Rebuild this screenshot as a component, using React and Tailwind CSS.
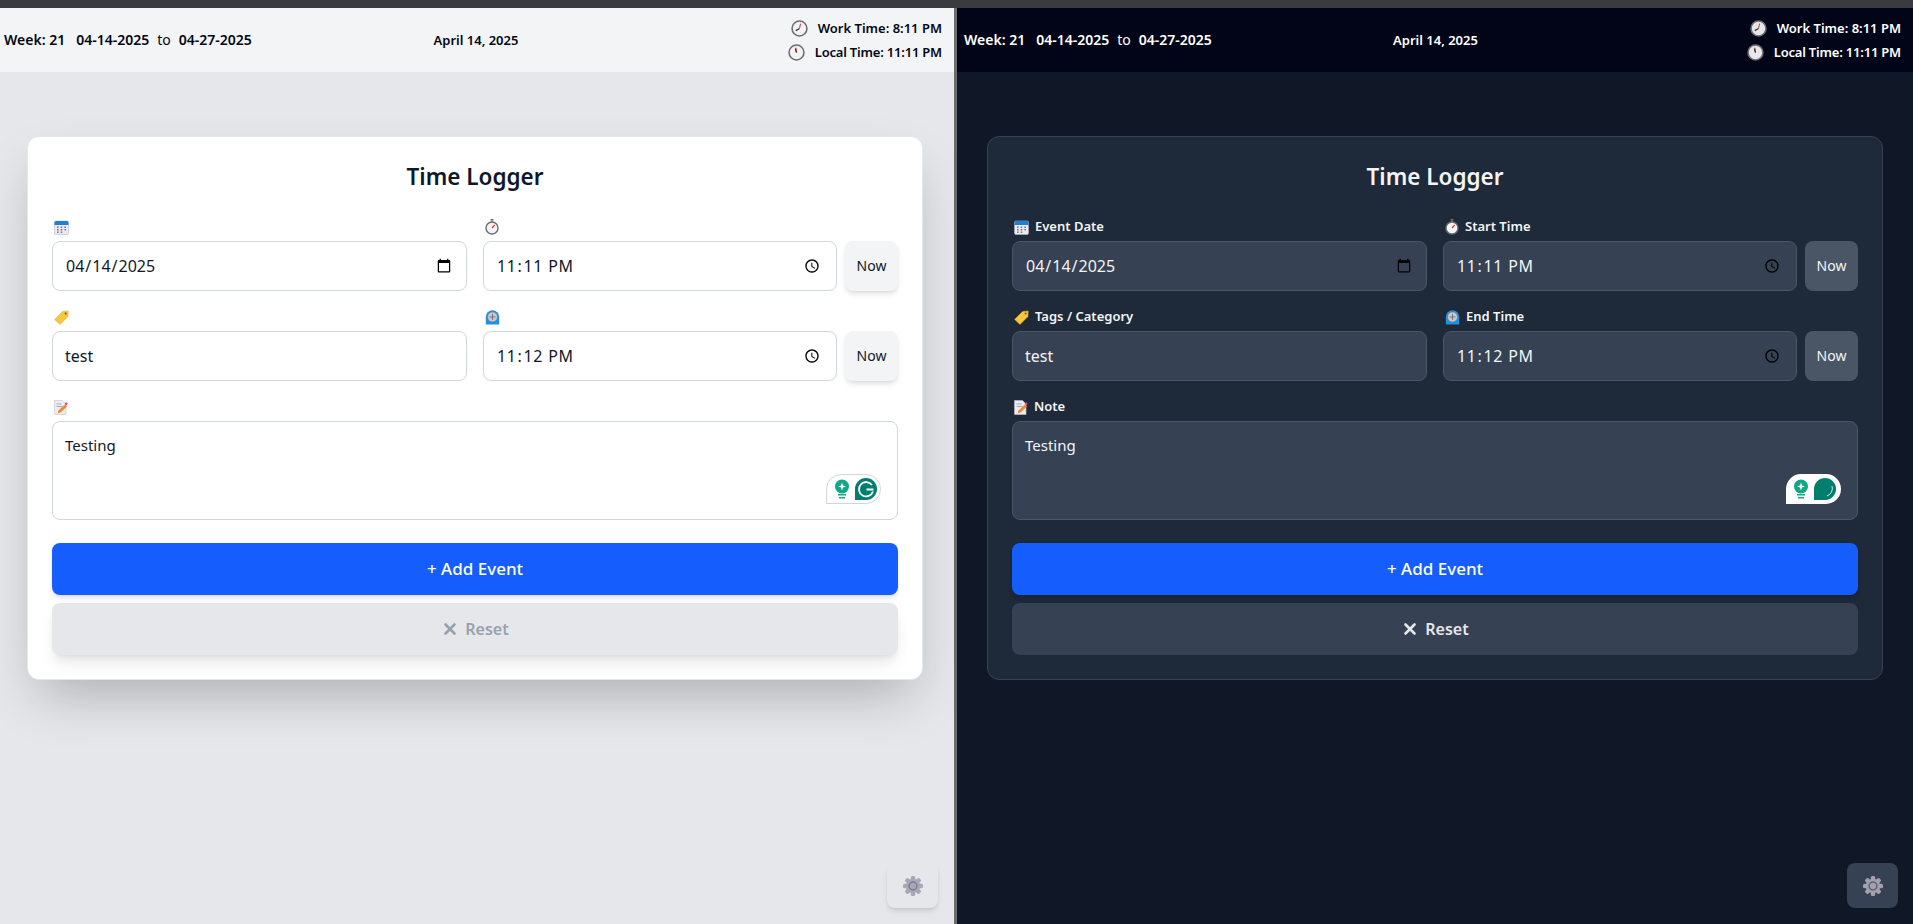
import React from 'react';
import { X } from 'lucide-react';

const LIGHT = {
  pane: 'w-[954px]',
  main: 'bg-[#e5e7eb] pr-1',
  header: 'bg-[#f3f4f6] text-[#030712] pl-1 pr-3',
  card: 'bg-white border-[#e5e7eb] shadow-2xl',
  title: 'text-[#101828]',
  input: 'bg-white border-[#d1d5dc] text-[#101828]',
  now: 'bg-[#f3f4f6] text-[#101828] shadow-md',
  reset: 'bg-[#e5e7eb] text-[#99a1af] shadow-lg',
  gear: 'bg-[#e5e7eb] shadow-md right-4',
  widget: 'bg-white border border-[#d1d5dc]',
};

const DARK = {
  pane: 'w-[956px]',
  main: 'bg-[#101828]',
  header: 'bg-[#020518] text-white pl-[7px] pr-3',
  card: 'bg-[#1e2939] border-[#364153]',
  title: 'text-[#f3f4f6]',
  input: 'bg-[#364153] border-[#4a5565] text-[#f3f4f6]',
  now: 'bg-[#4a5565] text-[#f3f4f6]',
  reset: 'bg-[#364153] text-[#e5e7eb]',
  gear: 'bg-[#364153] right-[15px]',
  widget: 'bg-white',
};

const FONT = { fontFamily: '"Noto Sans", sans-serif' };

const CalendarIcon = () => (
  <svg width="15" height="15" viewBox="0 0 15 15">
    <rect x="0.5" y="1" width="14" height="13.5" rx="1.5" fill="#eceaf2" stroke="#b9b6c6" strokeWidth="0.6" />
    <path d="M0.5 5V2.5A1.5 1.5 0 0 1 2 1h11a1.5 1.5 0 0 1 1.5 1.5V5z" fill="#1f7fd6" />
    <g fill="#6f6c85">
      <rect x="3" y="6.5" width="1.6" height="1.4" />
      <rect x="6.7" y="6.5" width="1.6" height="1.4" />
      <rect x="10.4" y="6.5" width="1.6" height="1.4" />
      <rect x="3" y="9" width="1.6" height="1.4" />
      <rect x="6.7" y="9" width="1.6" height="1.4" />
      <rect x="10.4" y="9" width="1.6" height="1.4" />
      <rect x="3" y="11.5" width="1.6" height="1.4" />
      <rect x="6.7" y="11.5" width="1.6" height="1.4" />
    </g>
  </svg>
);

const StopwatchIcon = () => (
  <svg width="14" height="16" viewBox="0 0 14 16">
    <rect x="5.5" y="0" width="3" height="1.5" fill="#6b6b73" />
    <rect x="6.3" y="1.5" width="1.4" height="2" fill="#8a8a92" />
    <circle cx="7" cy="9" r="6" fill="#f5f5f7" stroke="#6b6b73" strokeWidth="1.4" />
    <path d="M7 9.2L9.6 5.8" stroke="#e5392f" strokeWidth="1.3" />
  </svg>
);

const TagIcon = () => (
  <svg width="15" height="15" viewBox="0 0 15 15">
    <path d="M0.6 9.4L8.6 1.4 14.2 0.9 14 6.6 6 14.4z" fill="#f6c63f" stroke="#dda52a" strokeWidth="0.5" />
    <circle cx="11.6" cy="3.6" r="1" fill="#6d5a2b" />
  </svg>
);

const MantelClockIcon = () => (
  <svg width="15" height="15" viewBox="0 0 15 15">
    <path d="M0.8 14.5V7a6.7 6.7 0 0 1 13.4 0v7.5z" fill="#1b93e0" />
    <circle cx="7.5" cy="7" r="5" fill="#c9c7cf" stroke="#77757f" strokeWidth="0.6" />
    <path d="M7.5 3.8V7M4.5 7h6M7.5 7v3" stroke="#66646e" strokeWidth="0.8" />
  </svg>
);

const MemoIcon = () => (
  <svg width="14" height="15" viewBox="0 0 14 15">
    <path d="M0.5 0.5h8l3.5 3.5v10.5h-11.500z" fill="#eeecf3" stroke="#c4c1cf" strokeWidth="0.6" />
    <path d="M2.500 4h5M2.500 6.500h6" stroke="#a9a6ba" strokeWidth="1" />
    <path d="M3.500 13.500l1-3 6.500-6 2 2-6.500 6z" fill="#f08a2c" />
    <rect x="11" y="2.500" width="2.500" height="2.500" rx="1" fill="#ea3f74" transform="rotate(45 12.200 3.700)" />
  </svg>
);

const ClockFace = ({ hands, dark }) => (
  <svg width="17" height="17" viewBox="0 0 16 16">
    <circle cx="8" cy="8" r="7" fill={dark ? '#e8e8ea' : '#f3f3f5'} stroke="#6d6d73" strokeWidth="1.500" />
    {hands}
  </svg>
);

const WorkHands = (
  <>
    <path d="M8 8L9 3.500" stroke="#e5392f" strokeWidth="1" />
    <path d="M8 8L4.500 10" stroke="#333" strokeWidth="1.200" />
  </>
);

const LocalHands = (
  <>
    <path d="M8 8L7.300 3.500" stroke="#e5392f" strokeWidth="1.200" />
    <path d="M8 8L6.800 4.500" stroke="#333" strokeWidth="1" />
  </>
);

const GearIcon = ({ color, ring }) => (
  <svg width="20" height="20" viewBox="0 0 20 20">
    <g fill={color}>
      {[0, 45, 90, 135, 180, 225, 270, 315].map((deg) => (
        <rect key={deg} x="7.800" y="0" width="4.400" height="5" rx="1.500" transform={`rotate(${deg} 10 10)`} />
      ))}
      <circle cx="10" cy="10" r="7.200" />
    </g>
    <circle cx="10" cy="10" r="3.900" fill="none" stroke={ring} strokeWidth="1.500" />
  </svg>
);

const GrammarlyBadge = ({ dark, className }) => (
  <div className={`absolute right-[17px] bottom-[16px] w-[55px] h-[30px] rounded-[15px] rounded-bl-none flex items-center pl-[7px] ${className}`}>
    <svg width="16" height="20" viewBox="0 0 16 20" className="shrink-0">
      <circle cx="8" cy="7.500" r="7" fill="#11a887" />
      <path d="M8 3.500l1 3 3 1-3 1-1 3-1-3-3-1 3-1z" fill="#fff" />
      <rect x="4" y="15" width="8" height="1.500" fill="#11a887" />
      <rect x="5" y="18" width="6" height="1.500" fill="#11a887" />
    </svg>
    <svg width="22" height="22" viewBox="0 0 22 22" className="ml-[5px] shrink-0">
      <path d="M11 0a11 11 0 0 1 0 22H0V11A11 11 0 0 1 11 0z" fill="#027e6f" />
      {dark ? (
        <path d="M18 8a8 8 0 0 1-5 10" fill="none" stroke="#cfe9e4" strokeWidth="1" />
      ) : (
        <path d="M17 7a7.200 7.200 0 1 0 1 6.500M11.500 11.500H18.500" fill="none" stroke="#fff" strokeWidth="1.800" />
      )}
    </svg>
  </div>
);

const Label = ({ icon, text }) => (
  <label className="flex items-center gap-[6px] h-5 mb-1 pl-[2px] text-[13px] font-semibold text-[#f3f4f6]">
    {icon}
    {text}
  </label>
);

const Pane = ({ dark }) => {
  const t = dark ? DARK : LIGHT;
  const inputClass = `w-full h-[50px] rounded-lg border px-3 text-base outline-none ${t.input}`;

  return (
    <div className={`relative shrink-0 flex flex-col ${t.pane}`} style={FONT}>
      <header className={`h-16 flex items-center justify-between text-sm font-semibold ${t.header}`}>
        <div className="w-[320px] whitespace-nowrap">
          <span>Week: 21</span>
          <span className="ml-[11px]">04-14-2025</span>
          <span className="mx-2 font-normal">to</span>
          <span>04-27-2025</span>
        </div>
        <div className="whitespace-nowrap text-[13px] ml-[6px]">April 14, 2025</div>
        <div className="w-[320px] flex flex-col items-end text-[13px]">
          <div className="h-6 flex items-center gap-[10px]">
            <ClockFace dark={dark} hands={WorkHands} />
            <span>Work Time: 8:11 PM</span>
          </div>
          <div className="h-6 flex items-center gap-[10px]">
            <ClockFace dark={dark} hands={LocalHands} />
            <span className="tracking-[-0.2px]">Local Time: 11:11 PM</span>
          </div>
        </div>
      </header>

      <main className={`flex-1 pt-16 ${t.main}`}>
        <div className={`w-[896px] mx-auto rounded-xl border p-6 ${t.card}`}>
          <h2 className={`h-8 mb-6 text-center text-[22.500px] leading-8 font-semibold ${t.title}`}>Time Logger</h2>

          <div className="grid grid-cols-2 gap-x-4 gap-y-4">
            <div>
              <Label icon={<CalendarIcon />} text={dark ? 'Event Date' : ''} />
              <input type="date" defaultValue="2025-04-14" className={inputClass} style={FONT} />
            </div>
            <div>
              <Label icon={<StopwatchIcon />} text={dark ? 'Start Time' : ''} />
              <div className="flex gap-2">
                <input type="time" defaultValue="23:11" className={`${inputClass} min-w-0 tracking-[0.6px]`} style={FONT} />
                <button type="button" className={`w-[53px] shrink-0 h-[50px] rounded-lg text-sm ${t.now}`}>Now</button>
              </div>
            </div>
            <div>
              <Label icon={<TagIcon />} text={dark ? 'Tags / Category' : ''} />
              <input type="text" defaultValue="test" className={inputClass} style={FONT} />
            </div>
            <div>
              <Label icon={<MantelClockIcon />} text={dark ? 'End Time' : ''} />
              <div className="flex gap-2">
                <input type="time" defaultValue="23:12" className={`${inputClass} min-w-0 tracking-[0.6px]`} style={FONT} />
                <button type="button" className={`w-[53px] shrink-0 h-[50px] rounded-lg text-sm ${t.now}`}>Now</button>
              </div>
            </div>
          </div>

          <div className="mt-4">
            <Label icon={<MemoIcon />} text={dark ? 'Note' : ''} />
            <div className="relative">
              <textarea
                defaultValue="Testing"
                className={`block w-full h-[99px] rounded-lg border px-3 py-[13px] text-[15px] leading-5 resize-none outline-none ${t.input}`}
                style={FONT}
              />
              <GrammarlyBadge dark={dark} className={t.widget} />
            </div>
          </div>

          <button type="button" className="mt-[23px] w-full h-[52px] rounded-lg bg-[#155dfc] text-white text-[17px] font-medium shadow-md">
            + Add Event
          </button>
          <button type="button" className={`mt-2 w-full h-[52px] rounded-lg text-base font-semibold flex items-center justify-center gap-[6px] ${t.reset}`}>
            <X size={18} strokeWidth={3.500} />
            Reset
          </button>
        </div>
      </main>

      <button type="button" className={`absolute bottom-4 w-[51px] h-[45px] rounded-lg flex items-center justify-center ${t.gear}`}>
        <GearIcon color={dark ? '#a3a0b0' : '#a9a6b8'} ring={dark ? '#5d6070' : '#7f7c92'} />
      </button>
    </div>
  );
};

export default function App() {
  return (
    <div className="h-[924px] w-[1913px] flex flex-col overflow-hidden">
      <div className="h-2 bg-[#3a3a3f] shrink-0" />
      <div className="flex-1 flex min-h-0">
        <Pane />
        <div className="w-[3px] bg-[#6b6b70] shrink-0" />
        <Pane dark />
      </div>
    </div>
  );
}
